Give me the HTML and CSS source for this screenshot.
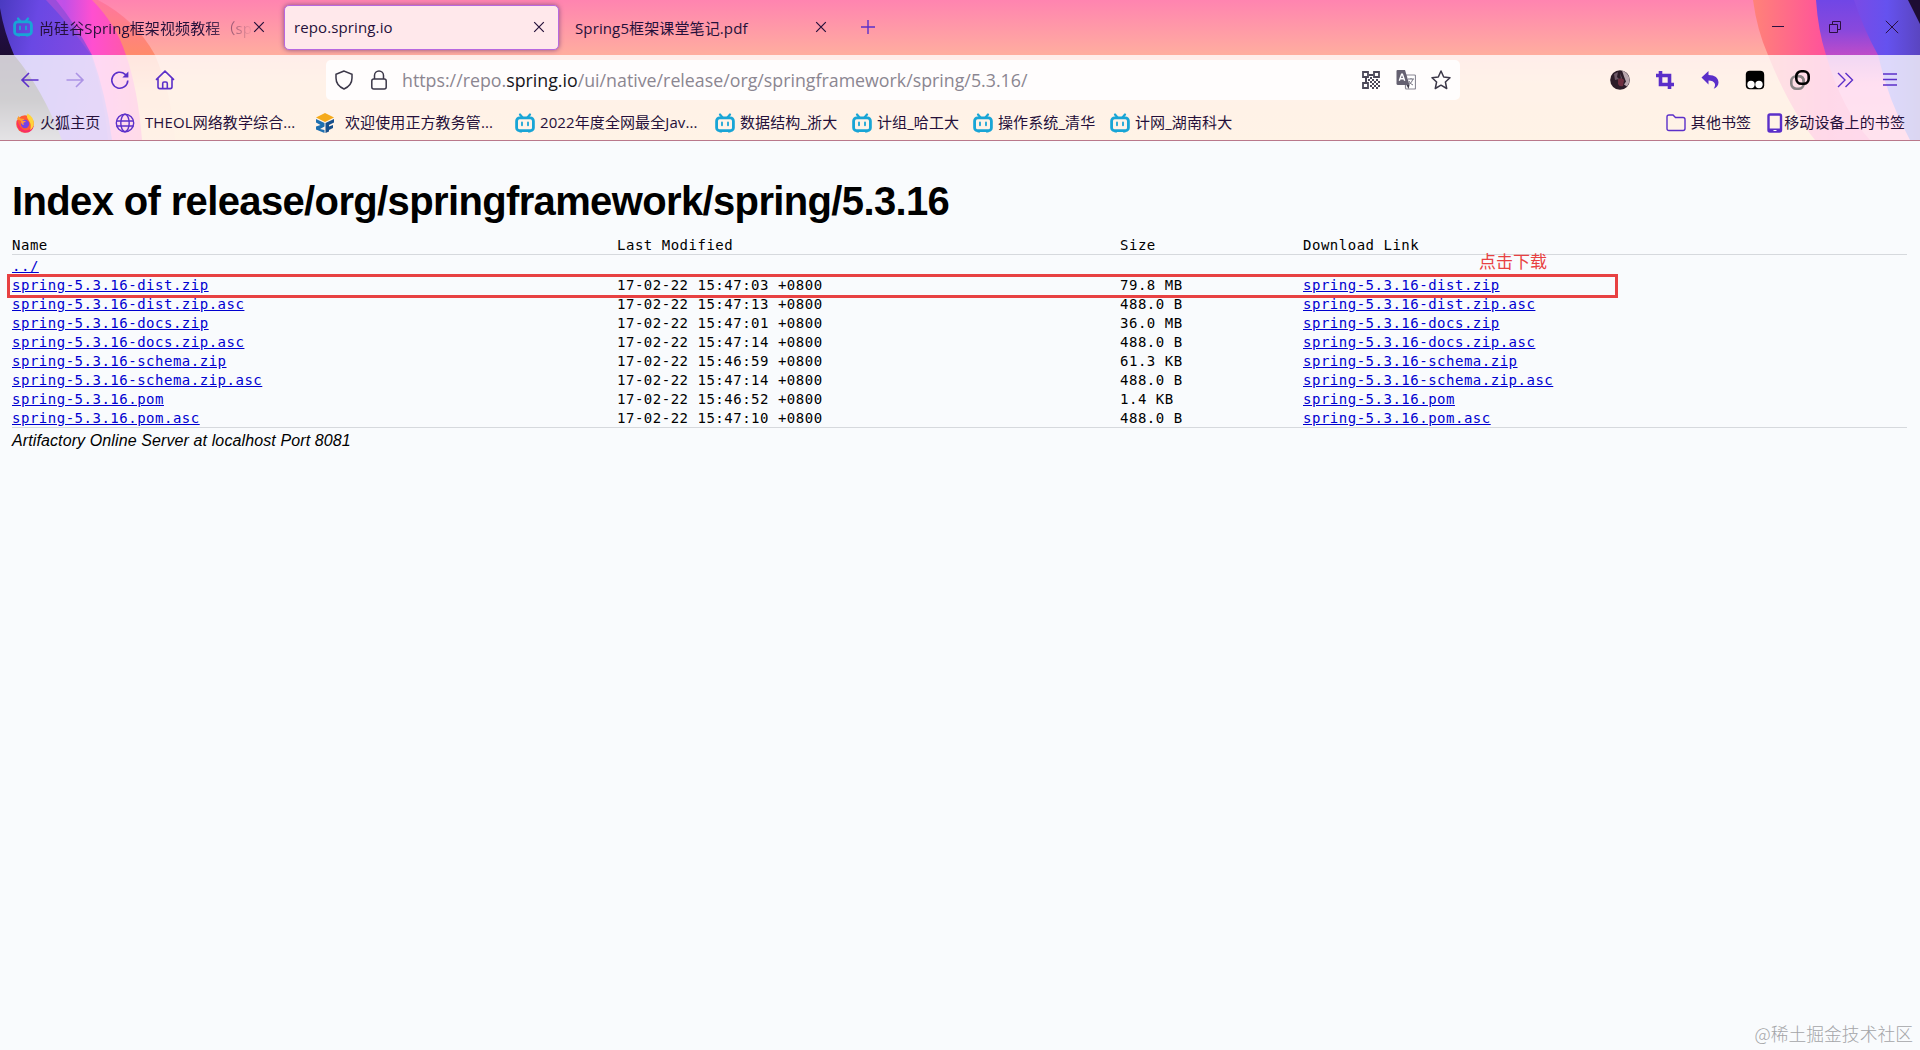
FILE: index.html
```
<!DOCTYPE html>
<html lang="zh-CN">
<head>
    <meta charset="utf-8">
    <title>repo.spring.io</title>
    <link rel="stylesheet" href="styles.css">
</head>
<body>
    <svg class="symbols" width="0" height="0">
        <symbol id="bili" viewBox="0 0 20 20">
            <path d="M5 1.5l2.5 3M15 1.5l-2.5 3" stroke="#18a5d6" stroke-width="2.2" stroke-linecap="round"/>
            <rect x="1.6" y="4.9" width="16.8" height="12.8" rx="3" fill="none" stroke="#18a5d6" stroke-width="2.8"/>
            <path d="M7 9.5v2.8M13 9.5v2.8" stroke="#18a5d6" stroke-width="1.8" stroke-linecap="round"/>
            <path d="M4.5 18.6h2.5M13 18.6h2.5" stroke="#18a5d6" stroke-width="1.6"/>
        </symbol>
        <symbol id="close" viewBox="0 0 12 12">
            <path d="M1.2 1.2l9.6 9.6M10.8 1.2l-9.6 9.6" fill="none" stroke="currentColor" stroke-width="1.2"/>
        </symbol>
    </svg>

    <header class="browser">
        <svg class="theme" viewBox="0 0 1920 140" preserveAspectRatio="none">
            <defs>
                <linearGradient id="sky" x1="0" y1="0" x2="0" y2="1">
                    <stop offset="0" stop-color="#ff84b0"/>
                    <stop offset=".39" stop-color="#ffad9f"/>
                    <stop offset=".6" stop-color="#ffc498"/>
                    <stop offset="1" stop-color="#ffc68e"/>
                </linearGradient>
                <linearGradient id="dark" x1="0" y1="0" x2="0" y2="1">
                    <stop offset="0" stop-color="#241050"/>
                    <stop offset=".4" stop-color="#1c0c30"/>
                    <stop offset=".7" stop-color="#2a2430"/>
                    <stop offset="1" stop-color="#86808c"/>
                </linearGradient>
                <linearGradient id="violet" x1="0" y1="0" x2="1" y2=".25">
                    <stop offset="0" stop-color="#4a3ac0"/>
                    <stop offset=".35" stop-color="#6a48e4"/>
                    <stop offset="1" stop-color="#8a4ae0"/>
                </linearGradient>
                <linearGradient id="pink" x1="0" y1="0" x2="1" y2="0">
                    <stop offset="0" stop-color="#e24be0"/>
                    <stop offset=".45" stop-color="#c050e8"/>
                    <stop offset=".65" stop-color="#ff4fd0"/>
                    <stop offset="1" stop-color="#ff5c98"/>
                </linearGradient>
                <linearGradient id="coral" x1="0" y1="0" x2="0" y2="1">
                    <stop offset="0" stop-color="#ff75a0"/>
                    <stop offset=".38" stop-color="#ff8a6c"/>
                    <stop offset=".65" stop-color="#ffb488"/>
                    <stop offset="1" stop-color="#ffc090"/>
                </linearGradient>
                <linearGradient id="pinkR" x1="0" y1="0" x2="1" y2="0">
                    <stop offset="0" stop-color="#ff8278"/>
                    <stop offset=".45" stop-color="#ff509c"/>
                    <stop offset="1" stop-color="#ff58b0"/>
                </linearGradient>
                <linearGradient id="violetR" x1="0" y1="0" x2="0" y2="1">
                    <stop offset="0" stop-color="#7046e6"/>
                    <stop offset=".22" stop-color="#8a48dc"/>
                    <stop offset=".4" stop-color="#c04cc8"/>
                    <stop offset=".6" stop-color="#ff70c0"/>
                    <stop offset="1" stop-color="#ff7cb0"/>
                </linearGradient>
                <linearGradient id="indigoR" x1="0" y1="0" x2="1" y2="0">
                    <stop offset="0" stop-color="#7a4ae6"/>
                    <stop offset=".5" stop-color="#6552ef"/>
                    <stop offset="1" stop-color="#5a45c0"/>
                </linearGradient>
            </defs>
            <rect width="1920" height="140" fill="url(#sky)"/>
            <path d="M0 0H98Q136 20 155 55Q172 95 175 140H0Z" fill="url(#coral)"/>
            <path d="M0 0H92Q116 24 126 55Q138 90 142 140H0Z" fill="url(#pink)"/>
            <path d="M0 0H56Q76 25 92 55Q106 95 112 140H0Z" fill="#9b4ddb"/>
            <path d="M0 0H46Q70 25 91 55Q104 95 108 140H0Z" fill="url(#violet)"/>
            <path d="M0 8Q4 32 14 55Q42 88 62 140H0Z" fill="url(#dark)"/>
            <path d="M1753 0Q1757 30 1768 55Q1790 110 1815 140H1920V0Z" fill="url(#pinkR)"/>
            <path d="M1816 0Q1818 30 1826 55Q1842 110 1870 140H1920V0Z" fill="url(#violetR)"/>
            <path d="M1854 0Q1864 30 1878 55Q1888 100 1910 140H1920V0Z" fill="url(#indigoR)"/>
            <path d="M1908 0L1920 24V0Z" fill="#1e0d34"/>
        </svg>

        <div class="tabs">
            <div class="tab">
                <svg class="icon20"><use href="#bili"/></svg>
                <span class="tab-title fade">尚硅谷Spring框架视频教程（sp</span>
                <svg class="close"><use href="#close"/></svg>
            </div>
            <div class="tab active">
                <span class="tab-title">repo.spring.io</span>
                <svg class="close"><use href="#close"/></svg>
            </div>
            <div class="tab">
                <span class="tab-title">Spring5框架课堂笔记.pdf</span>
                <svg class="close"><use href="#close"/></svg>
            </div>
            <svg class="new-tab" viewBox="0 0 16 16"><path d="M8 1v14M1 8h14" stroke="#5b2fc9" stroke-width="1.4"/></svg>
            <div class="window-buttons">
                <svg viewBox="0 0 14 14"><path d="M1 6.5h12" stroke="#2b1040"/></svg>
                <svg viewBox="0 0 14 14" fill="none" stroke="#2b1040"><path d="M1.5 4.5h8v8h-8zM4.5 4.5v-3h8v8h-3"/></svg>
                <svg viewBox="0 0 14 14"><path d="M.8 .8l12.4 12.4M13.2 .8L.8 13.2" stroke="#2b1040"/></svg>
            </div>
        </div>

        <div class="toolbar">
            <div class="nav">
                <svg viewBox="0 0 20 20"><path d="M18.5 10H2M9 3L2 10l7 7"/></svg>
                <svg viewBox="0 0 20 20" class="disabled"><path d="M1.5 10H18M11 3l7 7-7 7"/></svg>
                <svg viewBox="0 0 20 20"><path d="M17.8 10.5a8 8 0 1 1-2.6-6.2l2 2"/><path d="M18.4 1.6v6h-6z" fill="#5b2fc9" stroke="none"/></svg>
                <svg viewBox="0 0 20 20"><path d="M1 9.8L10 1.2l9 8.600M3 8.400v8.400q0 1.800 1.800 1.800h10.400q1.800 0 1.800-1.800V8.400M7.700 18.400v-5q0-1.400 1.400-1.400h1.800q1.400 0 1.400 1.400v5"/></svg>
            </div>
            <div class="urlbar">
                <svg class="url-icon" viewBox="0 0 20 20"><path d="M10 1L2 4.200V8c0 5 3.500 9 8 11 4.500-2 8-6 8-11V4.200z"/></svg>
                <svg class="url-icon lock" viewBox="0 0 20 20"><rect x="2.800" y="9" width="14.400" height="10" rx="2"/><path d="M5.500 9V5.500a4.500 4.500 0 0 1 9 0V9"/></svg>
                <span class="url">https://repo.<b>spring.io</b>/ui/native/release/org/springframework/spring/5.3.16/</span>
                <svg class="url-icon qr" viewBox="0 0 18 18">
                    <path d="M1 1h5v5H1zM12 1h5v5h-5zM1 12h5v5H1z" fill="none" stroke="#4b4858" stroke-width="1.800"/>
                    <path d="M7 3h4v2H7zM8 6h2v2H8zM3 7h2v4H3zM6 8h2v2H6zM10 8h2v2h-2zM12 10h2v2h-2zM14 8h2v2h-2zM16 10h2v2h-2zM8 10h2v2H8zM10 12h2v2h-2zM14 12h2v2h-2zM8 14h2v2H8zM12 14h2v2h-2zM16 14h2v2h-2zM10 16h2v2h-2zM14 16h2v2h-2z" fill="#4b4858"/>
                </svg>
                <svg class="url-icon translate" viewBox="0 0 20 20">
                    <rect x="9.500" y="5" width="10" height="14" rx="1" fill="#fff" stroke="#8b8894" stroke-width="1.200"/>
                    <path d="M12 9h6M15 8v1M17 9q-1 4-5 6M13 11q1 3 4 4" fill="none" stroke="#777482" stroke-width="1"/>
                    <path d="M1.500 0H9l4.500 15H2Q.5 15 .5 13.500V1Q.5 0 1.500 0z" fill="#656171"/>
                    <path d="M10.500 15l2 4 1-4z" fill="#3e3b48"/>
                    <path d="M3.300 10.800L5.600 4.200h.8l2.300 6.600M4.100 8.700h3.800" fill="none" stroke="#fff" stroke-width="1.400"/>
                </svg>
                <svg class="url-icon" viewBox="0 0 20 20"><path stroke-linejoin="round" d="M10 1l2.700 6 6.300.700-4.600 4.300 1.300 6.500L10 15.200 4.300 18.500 5.600 12 1 7.700 7.300 7z"/></svg>
            </div>
            <div class="extensions">
                <svg viewBox="0 0 20 20"><circle cx="10" cy="10" r="9.800" fill="#2c1c28"/><path d="M12 .5a9.800 9.800 0 0 1 5 16l-3-2 2-3-2-5z" fill="#b9a7ae"/><path d="M8 9q4-2 6 1l-1 6q-4 1-5-2z" fill="#6e2f40"/><path d="M4 4l4-2-1 5 2 2-4 1zM10 3l2 5-1 1z" fill="#6c5867"/></svg>
                <svg viewBox="0 0 20 20"><path d="M5.500 1v13.500H19M1 5.500h13.500V19" fill="none" stroke="#5b2fc9" stroke-width="3.600"/></svg>
                <svg viewBox="0 0 20 20"><path d="M1.500 7.500L8.500 1v4C15 5 18.500 8 18.500 12.500c0 3-1.800 5-4.800 6.300 2.800-4 1.500-8-5.200-8.300v4z" fill="#5b2fc9"/></svg>
                <svg viewBox="0 0 20 20"><rect x=".8" y=".8" width="18.400" height="18.400" rx="4" fill="#000"/><circle cx="6" cy="14.500" r="3.700" fill="#fff"/><circle cx="14" cy="14.500" r="3.700" fill="#fff"/></svg>
                <svg viewBox="0 0 20 20" fill="none" stroke-width="2.600"><rect x="1.300" y="6.300" width="12.400" height="12.400" rx="5" stroke="#8b8586"/><rect x="6.300" y="1.300" width="12.400" height="12.400" rx="5" stroke="#000"/><path d="M9.500 6.300Q13.700 6.500 13.700 11.500" stroke="#8b8586"/></svg>
                <svg viewBox="0 0 20 20" class="line"><path d="M3 3l7 7-7 7M10.500 3l7 7-7 7"/></svg>
                <svg viewBox="0 0 20 20" class="line"><path d="M3 4h14M3 9.500h14M3 15h14"/></svg>
            </div>
        </div>

        <nav class="bookmarks">
            <div class="bookmark w100">
                <svg class="icon20" viewBox="0 0 20 20">
                    <circle cx="10" cy="11" r="8.800" fill="#ff5a35"/>
                    <path d="M2 7Q1 17 9 19.500q8 1 10-7-4 5-9 5-5-1-8-10.500z" fill="#f82d67"/>
                    <path d="M12.500.5Q19 4 18.800 11q-.3 4-3.800 6 2-5-1.500-10-2.500-3-1-6.500z" fill="#ffd43a"/>
                    <path d="M2 6l1.500-3 2 2.500 4 .5L8 9z" fill="#ff9d2e"/>
                    <circle cx="10" cy="11" r="4.200" fill="#7542e5"/>
                    <path d="M6 8q4-1 5 1-4 0-2 3-3 0-3-4z" fill="#ff9640"/>
                </svg>
                <span>火狐主页</span>
            </div>
            <div class="bookmark w200 wide">
                <svg class="icon20 line" viewBox="0 0 20 20"><circle cx="10" cy="10" r="8.700"/><ellipse cx="10" cy="10" rx="4.200" ry="8.700"/><path d="M1.500 8h17M1.500 13h17"/></svg>
                <span>THEOL网络教学综合...</span>
            </div>
            <div class="bookmark w200 wide">
                <svg class="icon20" viewBox="0 0 20 20"><path d="M10 0l9 4.500-9 4.500L1 4.500z" fill="#f5aa1b"/><path d="M1 6l8.500 4v3.500L5 16l4.500 1v3L1 16.500v-3L5.500 12 1 9.500z" fill="#1d6fb0"/><path d="M10.500 10L19 6v3.500L14 12v1.500l4-1.500v3l-4 2v1.500L10.500 20z" fill="#164f8b"/></svg>
                <span>欢迎使用正方教务管...</span>
            </div>
            <div class="bookmark w200"><svg class="icon20"><use href="#bili"/></svg><span>2022年度全网最全Jav...</span></div>
            <div class="bookmark w137"><svg class="icon20"><use href="#bili"/></svg><span>数据结构_浙大</span></div>
            <div class="bookmark w121"><svg class="icon20"><use href="#bili"/></svg><span>计组_哈工大</span></div>
            <div class="bookmark w137"><svg class="icon20"><use href="#bili"/></svg><span>操作系统_清华</span></div>
            <div class="bookmark"><svg class="icon20"><use href="#bili"/></svg><span>计网_湖南科大</span></div>
            <div class="bookmark other">
                <svg class="icon20 line" viewBox="0 0 20 20"><path d="M1 15.500V4q0-2 2-2h4l2.500 2.500H17q2 0 2 2v9q0 2-2 2H3q-2 0-2-2z"/></svg>
                <span>其他书签</span>
            </div>
            <div class="bookmark mobile">
                <svg viewBox="0 0 16 20"><rect x="1.500" y="1.500" width="12.500" height="17" rx="1.500" fill="none" stroke="#5b2fc9" stroke-width="2.400"/><path d="M2 17h12" stroke="#5b2fc9" stroke-width="3"/><path d="M6.500 17.500h3" stroke="#fff"/></svg>
                <span>移动设备上的书签</span>
            </div>
        </nav>
    </header>

    <main class="page">
        <h1>Index of release/org/springframework/spring/5.3.16</h1>
        <div class="row head"><span>Name</span><span>Last Modified</span><span>Size</span><span>Download Link</span></div>
        <div class="listing">
            <div class="row"><a href="#">../</a></div>
            <div class="row"><a href="#">spring-5.3.16-dist.zip</a><span>17-02-22 15:47:03 +0800</span><span>79.8 MB</span><a href="#">spring-5.3.16-dist.zip</a></div>
            <div class="row"><a href="#">spring-5.3.16-dist.zip.asc</a><span>17-02-22 15:47:13 +0800</span><span>488.0 B</span><a href="#">spring-5.3.16-dist.zip.asc</a></div>
            <div class="row"><a href="#">spring-5.3.16-docs.zip</a><span>17-02-22 15:47:01 +0800</span><span>36.0 MB</span><a href="#">spring-5.3.16-docs.zip</a></div>
            <div class="row"><a href="#">spring-5.3.16-docs.zip.asc</a><span>17-02-22 15:47:14 +0800</span><span>488.0 B</span><a href="#">spring-5.3.16-docs.zip.asc</a></div>
            <div class="row"><a href="#">spring-5.3.16-schema.zip</a><span>17-02-22 15:46:59 +0800</span><span>61.3 KB</span><a href="#">spring-5.3.16-schema.zip</a></div>
            <div class="row"><a href="#">spring-5.3.16-schema.zip.asc</a><span>17-02-22 15:47:14 +0800</span><span>488.0 B</span><a href="#">spring-5.3.16-schema.zip.asc</a></div>
            <div class="row"><a href="#">spring-5.3.16.pom</a><span>17-02-22 15:46:52 +0800</span><span>1.4 KB</span><a href="#">spring-5.3.16.pom</a></div>
            <div class="row"><a href="#">spring-5.3.16.pom.asc</a><span>17-02-22 15:47:10 +0800</span><span>488.0 B</span><a href="#">spring-5.3.16.pom.asc</a></div>
        </div>
        <address>Artifactory Online Server at localhost Port 8081</address>
    </main>

    <div class="mark-box"></div>
    <div class="mark-text">点击下载</div>
    <div class="watermark">@稀土掘金技术社区</div>
</body>
</html>
```
FILE: styles.css
```
* {
    box-sizing: border-box;
}

body {
    position: relative;
    height: 1050px;
    margin: 0;
    overflow: hidden;
    background-color: #f9fbfd;
    color: #000;
    font-family: "Liberation Sans", "Noto Sans CJK SC", sans-serif;
}

svg {
    flex: none;
}

.symbols {
    position: absolute;
}

/* browser chrome */
.browser {
    position: relative;
    height: 141px;
    border-bottom: 1px solid #b9788a;
    color: #25103a;
    font-family: "Open Sans", "Noto Sans CJK SC", sans-serif;
    font-size: 15px;
    white-space: nowrap;
}

.theme {
    position: absolute;
    top: 0;
    left: 0;
    width: 100%;
    height: 140px;
    z-index: -1;
}

.icon20 {
    width: 20px;
    height: 20px;
}

.line {
    fill: none;
    stroke: #5b2fc9;
    stroke-width: 1.4;
}

.tabs {
    display: flex;
    align-items: center;
    height: 55px;
    padding: 0 21px 1px 3px;
}

.tab {
    display: flex;
    align-items: center;
    width: 275px;
    height: 45px;
    margin-right: 6px;
    padding: 0 13px 0 10px;
    border-radius: 5px;
}

.tab.active {
    border: 1px solid #b868e0;
    background-color: #ffe8eb;
    box-shadow: 0 0 5px #8b4f80;
}

.tab.active .tab-title {
    margin-left: -1px;
}

.tab-title {
    flex: 1;
    overflow: hidden;
    letter-spacing: .12px;
}

.fade {
    margin-left: 6px;
    -webkit-mask-image: linear-gradient(90deg, #000 78%, transparent);
    mask-image: linear-gradient(90deg, #000 78%, transparent);
}

.close {
    width: 12px;
    height: 12px;
}

.new-tab {
    width: 16px;
    height: 16px;
    margin-left: 14px;
}

.window-buttons {
    display: flex;
    gap: 43px;
    margin-left: auto;
}

.window-buttons svg {
    width: 14px;
    height: 14px;
}

.toolbar {
    display: flex;
    align-items: center;
    height: 50px;
    padding: 0 20px;
    background-color: rgba(255, 255, 255, .78);
}

.nav {
    display: flex;
    gap: 25px;
    width: 306px;
}

.nav svg {
    width: 20px;
    height: 20px;
    fill: none;
    stroke: #5b2fc9;
    stroke-width: 1.6;
}

.nav .disabled {
    opacity: .4;
}

.urlbar {
    display: flex;
    align-items: center;
    width: 1134px;
    height: 40px;
    padding: 0 9px 0 8px;
    border-radius: 5px;
    background-color: #fffdfd;
}

.url-icon {
    width: 20px;
    height: 20px;
    fill: none;
    stroke: #3b3748;
    stroke-width: 1.5;
}

.url-icon.lock {
    margin-left: 15px;
}

.url-icon.qr {
    width: 18px;
    height: 18px;
    stroke: none;
}

.url-icon.translate {
    margin: 0 15px 0 16px;
    stroke: none;
}

.url {
    flex: 1;
    margin-left: 13px;
    color: #8b8691;
    font-size: 17.8px;
}

.url b {
    color: #15141a;
    font-weight: normal;
}

.extensions {
    display: flex;
    gap: 25px;
    margin-left: auto;
}

.extensions svg {
    width: 20px;
    height: 20px;
}

.bookmarks {
    display: flex;
    align-items: center;
    height: 35px;
    padding: 0 15px;
    background-color: rgba(255, 255, 255, .78);
}

.bookmark {
    display: flex;
    align-items: center;
    gap: 5px;
}

.bookmark span {
    margin-top: -2px;
    letter-spacing: .1px;
}

.bookmark.wide {
    gap: 10px;
}

.w100 { width: 100px; }
.w121 { width: 121px; }
.w137 { width: 137px; }
.w200 { width: 200px; }

.bookmark.other {
    margin-left: auto;
}

.bookmark.mobile {
    gap: 1px;
    margin-left: 16px;
}

.bookmark.mobile svg {
    width: 16px;
    height: 20px;
}

/* directory listing */
.page {
    padding: 0 13px 0 12px;
}

h1 {
    margin: 37px 0 9px;
    font-size: 40px;
    letter-spacing: -.64px;
    line-height: 46px;
}

.row {
    display: grid;
    grid-template-columns: 605px 503px 183px 1fr;
    height: 19px;
    font-family: "DejaVu Sans Mono", monospace;
    font-size: 14px;
    letter-spacing: .51px;
    line-height: 19px;
}

.row a {
    justify-self: start;
    color: #0000d0;
}

.row.head {
    height: 22px;
    line-height: 24px;
    border-bottom: 1px solid #d6d9dd;
}

.listing {
    height: 173px;
    padding-top: 2px;
    border-bottom: 1px solid #d6d9dd;
}

address {
    font-size: 16px;
    letter-spacing: .11px;
    line-height: 25px;
}

/* annotations over the page */
.mark-box {
    position: absolute;
    top: 274px;
    left: 7px;
    width: 1611px;
    height: 24px;
    border: 3px solid #e84142;
}

.mark-text {
    position: absolute;
    top: 248px;
    left: 1479px;
    color: #e84142;
    font-family: "Noto Sans CJK SC", sans-serif;
    font-size: 17px;
    line-height: 25px;
}

.watermark {
    position: absolute;
    right: 7px;
    bottom: 5px;
    color: #a4a5a8;
    font-family: "Noto Sans CJK SC", sans-serif;
    font-size: 17.8px;
    font-weight: 300;
    line-height: 24px;
}
```
